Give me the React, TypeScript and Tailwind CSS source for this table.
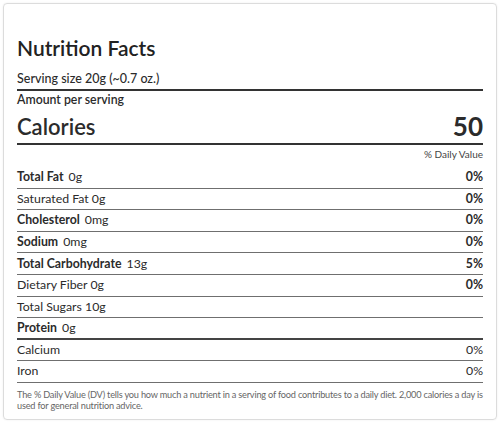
const rows: {
  name: string;
  amount: string;
  dv?: string;
  bold?: boolean;
  thick?: boolean;
  plainDv?: boolean;
}[] = [
  { name: "Total Fat", amount: "0g", dv: "0%", bold: true },
  { name: "Saturated Fat", amount: "0g", dv: "0%" },
  { name: "Cholesterol", amount: "0mg", dv: "0%", bold: true },
  { name: "Sodium", amount: "0mg", dv: "0%", bold: true },
  { name: "Total Carbohydrate", amount: "13g", dv: "5%", bold: true },
  { name: "Dietary Fiber", amount: "0g", dv: "0%" },
  { name: "Total Sugars", amount: "10g" },
  { name: "Protein", amount: "0g", bold: true, thick: true },
  { name: "Calcium", amount: "", dv: "0%", plainDv: true },
  { name: "Iron", amount: "", dv: "0%", plainDv: true },
];

function NutrientRow({ row }: { row: (typeof rows)[number] }) {
  return (
    <div
      className={
        "flex h-[21.6px] items-center justify-between text-[12.3px] leading-none " +
        (row.thick ? "border-b-2 border-[#444]" : "border-b border-[#6f6f6f]")
      }
    >
      <span>
        {row.bold ? (
          <>
            <span className="font-bold">{row.name}</span>
            {row.amount && <span className="ml-[5px]">{row.amount}</span>}
          </>
        ) : (
          <span>
            {row.name}
            {row.amount && ` ${row.amount}`}
          </span>
        )}
      </span>
      {row.dv && (
        <span className={row.plainDv ? "" : "font-bold"}>{row.dv}</span>
      )}
    </div>
  );
}

export default function App() {
  return (
    <div
      className="h-[425px] w-[500px] bg-white p-[3px] text-[#2b2b2b]"
      style={{ fontFamily: "Lato, 'Open Sans', sans-serif" }}
    >
      <div className="h-[417px] rounded-[4px] border border-[#dcdcdc] px-[13px] pt-[30px] shadow-[0_0_2px_rgba(0,0,0,0.08)]">
        <h1 className="text-[21px] leading-[28px] font-semibold text-[#222]">
          Nutrition Facts
        </h1>
        <div className="mt-[9px] border-b-2 border-[#333] pb-[2px] text-[12.5px] leading-[16px] font-medium">
          Serving size 20g (~0.7 oz.)
        </div>
        <div className="mt-[2px] text-[12.3px] leading-[14px] font-semibold">
          Amount per serving
        </div>
        <div className="mt-[5px] flex items-end justify-between border-b-2 border-[#333] pb-[3px]">
          <span className="text-[22px] leading-[26px] font-semibold">Calories</span>
          <span className="text-[26px] leading-[28px] font-bold">50</span>
        </div>
        <div className="h-[22px] pt-[2px] text-right text-[10px] leading-[14px] text-[#444]">
          % Daily Value
        </div>
        {rows.map((r) => (
          <NutrientRow key={r.name} row={r} />
        ))}
        <p className="mt-[6px] text-[9.2px] leading-[11px] tracking-[-0.2px] text-[#666]">
          The % Daily Value (DV) tells you how much a nutrient in a serving of
          food contributes to a daily diet. 2,000 calories a day is used for
          general nutrition advice.
        </p>
      </div>
    </div>
  );
}
